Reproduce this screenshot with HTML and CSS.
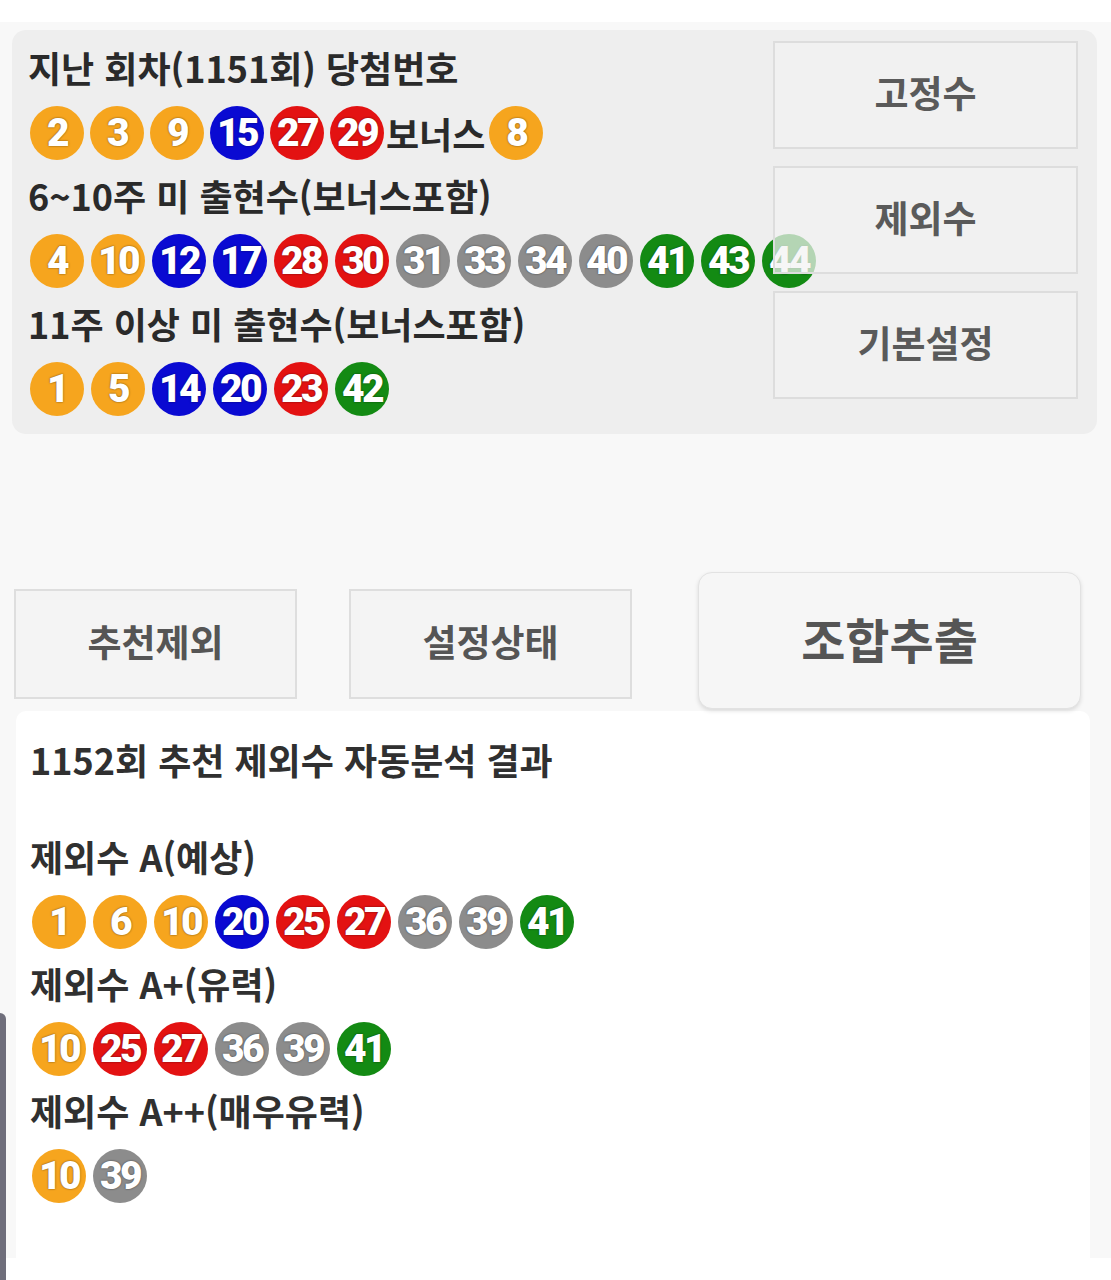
FILE: index.html
```html
<!DOCTYPE html>
<html lang="ko">
<head>
    <meta charset="UTF-8">
    <meta name="viewport" content="width=device-width, initial-scale=1.0">
    <title>로또 제외수 분석</title>
    <link rel="stylesheet" href="styles.css">
</head>
<body>
    <div class="page">
        <!-- 지난 회차 정보 -->
        <div class="panel">
            <div class="label">지난 회차(1151회) 당첨번호</div>
            <div class="balls tight">
                <span class="ball y">2</span>
                <span class="ball y">3</span>
                <span class="ball y">9</span>
                <span class="ball b">15</span>
                <span class="ball r">27</span>
                <span class="ball r">29</span>
                <span class="bonus">보너스</span>
                <span class="ball y">8</span>
            </div>
            <div class="label">6~10주 미 출현수(보너스포함)</div>
            <div class="balls">
                <span class="ball y">4</span>
                <span class="ball y">10</span>
                <span class="ball b">12</span>
                <span class="ball b">17</span>
                <span class="ball r">28</span>
                <span class="ball r">30</span>
                <span class="ball k">31</span>
                <span class="ball k">33</span>
                <span class="ball k">34</span>
                <span class="ball k">40</span>
                <span class="ball g">41</span>
                <span class="ball g">43</span>
                <span class="ball g">44</span>
            </div>
            <div class="label">11주 이상 미 출현수(보너스포함)</div>
            <div class="balls">
                <span class="ball y">1</span>
                <span class="ball y">5</span>
                <span class="ball b">14</span>
                <span class="ball b">20</span>
                <span class="ball r">23</span>
                <span class="ball g">42</span>
            </div>

            <!-- 오른쪽 설정 버튼 -->
            <div class="side">
                <div class="side-btn">고정수</div>
                <div class="side-btn">제외수</div>
                <div class="side-btn">기본설정</div>
            </div>
        </div>

        <!-- 하단 버튼 -->
        <div class="actions">
            <div class="act">추천제외</div>
            <div class="act second">설정상태</div>
            <div class="act main">조합추출</div>
        </div>

        <!-- 분석 결과 -->
        <div class="card">
            <div class="label card-title">1152회 추천 제외수 자동분석 결과</div>
            <div class="label">제외수 A(예상)</div>
            <div class="balls">
                <span class="ball y">1</span>
                <span class="ball y">6</span>
                <span class="ball y">10</span>
                <span class="ball b">20</span>
                <span class="ball r">25</span>
                <span class="ball r">27</span>
                <span class="ball k">36</span>
                <span class="ball k">39</span>
                <span class="ball g">41</span>
            </div>
            <div class="label">제외수 A+(유력)</div>
            <div class="balls">
                <span class="ball y">10</span>
                <span class="ball r">25</span>
                <span class="ball r">27</span>
                <span class="ball k">36</span>
                <span class="ball k">39</span>
                <span class="ball g">41</span>
            </div>
            <div class="label">제외수 A++(매우유력)</div>
            <div class="balls">
                <span class="ball y">10</span>
                <span class="ball k">39</span>
            </div>
        </div>
    </div>

    <!-- 화면 왼쪽 엣지 핸들 -->
    <div class="edge-handle"></div>
</body>
</html>
```

FILE: styles.css
```css
* {
    margin: 0;
    padding: 0;
    box-sizing: border-box;
}

html, body {
    width: 100%;
    height: 100%;
    overflow: hidden;
}

body {
    background: #ffffff;
    font-family: "Noto Sans CJK KR", "Noto Sans", sans-serif;
    color: #222222;
}

.page {
    margin-top: 22px;
    height: 1236px;
    background: #f8f8f8;
    padding: 8px 14px 0 12px;
}

/* 상단 회색 패널 */
.panel {
    position: relative;
    background: #eeeeee;
    border-radius: 14px;
    padding: 6px 16px 14px 16px;
}

.label {
    font-size: 36px;
    line-height: 62px;
    font-weight: 700;
    color: #2a2a2a;
    white-space: nowrap;
}

.balls {
    display: flex;
    align-items: center;
    gap: 7px;
    margin: 8px 0 4px 2px;
    height: 54px;
}

.balls.tight {
    gap: 6px;
}

.ball {
    width: 54px;
    height: 54px;
    border-radius: 50%;
    display: flex;
    justify-content: center;
    align-items: center;
    font-family: Roboto, "Liberation Sans", sans-serif;
    font-size: 39px;
    font-weight: 900;
    letter-spacing: -2.5px;
    color: #ffffff;
    text-shadow: 0 0 2px rgba(0, 0, 0, 0.6);
    flex-shrink: 0;
}

.ball.y { background: #f6a51e; }
.ball.b { background: #0a0ad2; }
.ball.r { background: #e31212; }
.ball.k { background: #8c8c8c; }
.ball.g { background: #138a13; }

.bonus {
    font-size: 36px;
    font-weight: 700;
    color: #2a2a2a;
    margin: 0 -2px 0 -4px;
}

/* 오른쪽 버튼 (공 위에 겹침) */
.side {
    position: absolute;
    top: 11px;
    right: 19px;
    width: 305px;
    display: flex;
    flex-direction: column;
    gap: 17px;
    z-index: 2;
}

.side-btn {
    height: 108px;
    border: 2px solid #dddddd;
    background: rgba(243, 243, 243, 0.72);
    display: flex;
    justify-content: center;
    align-items: center;
    padding-bottom: 6px;
    font-size: 37px;
    font-weight: 700;
    color: #5a5a5a;
}

/* 하단 버튼 줄 */
.actions {
    display: flex;
    align-items: center;
    margin-top: 138px;
    padding-left: 2px;
    height: 137px;
}

.act {
    width: 283px;
    height: 110px;
    margin-top: 6px;
    border: 2px solid #dedede;
    background: #f4f4f4;
    display: flex;
    justify-content: center;
    align-items: center;
    padding-bottom: 6px;
    font-size: 37px;
    font-weight: 700;
    color: #555555;
}

.act.second {
    margin-left: 52px;
}

.act.main {
    margin-left: 66px;
    margin-top: 0;
    width: 383px;
    height: 137px;
    border: 1px solid #e2e2e2;
    border-radius: 14px;
    background: #f6f6f6;
    box-shadow: 0 2px 4px rgba(0, 0, 0, 0.12);
    font-size: 48px;
}

/* 결과 카드 */
.card {
    margin: 2px 7px 0 4px;
    height: 548px;
    background: #ffffff;
    border-radius: 10px 10px 0 0;
    padding: 17px 14px 0 14px;
}

.card .label {
    color: #303030;
}

.card .balls {
    margin: 8px 0 3px 2px;
}

.card-title {
    margin-bottom: 35px;
}

.edge-handle {
    position: fixed;
    left: 0;
    top: 1013px;
    width: 6px;
    height: 267px;
    background: #6f6e7b;
    border-radius: 0 6px 0 0;
}
```
